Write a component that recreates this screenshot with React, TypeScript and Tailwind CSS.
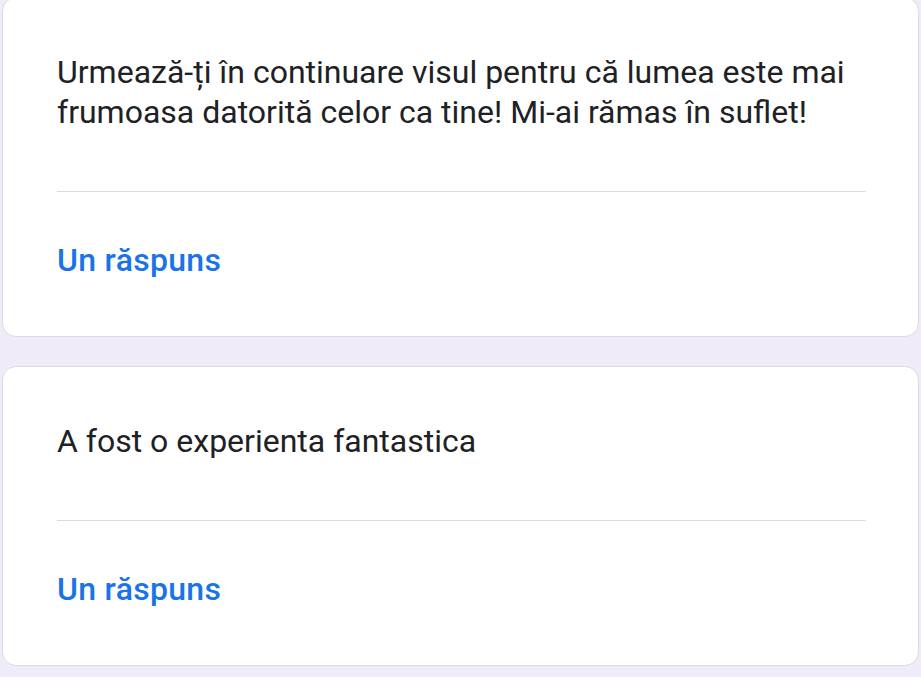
export default function App() {
  const cards = [
    {
      text: "Urmează-ți în continuare visul pentru că lumea este mai frumoasa datorită celor ca tine! Mi-ai rămas în suflet!",
      first: true,
    },
    { text: "A fost o experienta fantastica", first: false },
  ];

  return (
    <div className="min-h-[677px] w-[921px] overflow-hidden bg-[#efebf8] font-['Roboto',sans-serif]">
      <div className="flex flex-col gap-[29px] px-[2px] pb-[10px]">
        {cards.map((c, i) => (
          <div
            key={i}
            className={`rounded-[14px] border border-[#dadce0] bg-white pl-[54px] pr-[52px] pt-[54px] pb-[58px] ${
              c.first ? "-mt-[3px]" : ""
            }`}
          >
            <p className="text-[32px] leading-[40px] text-[#202124]">{c.text}</p>
            <div className="mt-[59px] h-[1px] bg-[#dadce0]" />
            <div className="mt-[50px] text-[32px] leading-[36px] font-medium tracking-[0.3px] text-[#1a73e8]">
              Un răspuns
            </div>
          </div>
        ))}
      </div>
    </div>
  );
}
